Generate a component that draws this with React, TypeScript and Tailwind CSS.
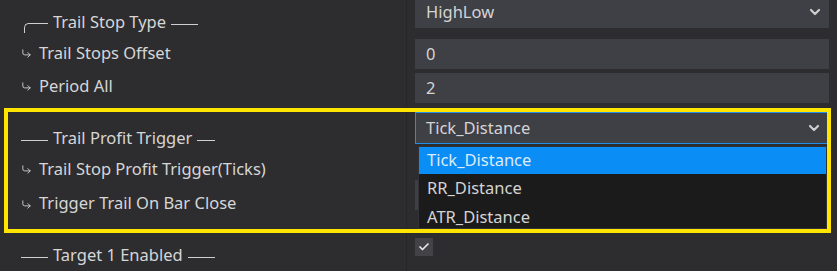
import { ChevronDown, Check, CornerDownRight } from 'lucide-react'

const font = { fontFamily: '"Noto Sans", "DejaVu Sans", sans-serif' }

function Label({ text, h, mt = 0 }: { text: React.ReactNode; h: number; mt?: number }) {
  return (
    <div className="flex items-center pl-[21px] text-[16.5px] text-[#d6d6d6] whitespace-nowrap" style={{ height: h, marginTop: mt }}>
      {text}
    </div>
  )
}

const Arrow = () => <CornerDownRight size={11} strokeWidth={2} className="mr-[7px] mt-[1px] text-[#d0d0d0]" />
const Line = ({ w }: { w: number }) => <span className="mt-[4px] inline-block h-px bg-[#cfcfcf]" style={{ width: w }} />

export default function App() {
  return (
    <div className="relative flex w-[837px] h-[271px] overflow-hidden bg-[#2d2d30]" style={font}>
      {/* labels */}
      <div className="w-[407px] shrink-0 border-r border-[#27272a] pt-[7px]">
        <Label
          h={30}
          text={
            <span className="flex items-center gap-[5px]">
              <span className="ml-[3px] mt-[12px] h-[10px] w-[24px] rounded-tl-[5px] border-l border-t border-[#cfcfcf]" />
              Trail Stop Type
              <Line w={27} />
            </span>
          }
        />
        <Label h={32} text={<><Arrow />Trail Stops Offset</>} />
        <Label h={34} text={<><Arrow />Period All</>} />
        <Label h={33} mt={19} text={<span className="flex items-center gap-[5px]"><Line w={27} />Trail Profit Trigger<Line w={18} /></span>} />
        <Label h={28} text={<><Arrow />Trail Stop Profit Trigger(Ticks)</>} />
        <Label h={41} text={<><Arrow />Trigger Trail On Bar Close</>} />
        <Label h={30} mt={16} text={<span className="flex items-center gap-[5px]"><Line w={27} />Target 1 Enabled<Line w={27} /></span>} />
      </div>

      {/* values */}
      <div className="flex-1 px-[8px] text-[16.5px] text-[#d4d4d4]">
        <div className="flex h-[28px] items-center justify-between bg-[#3f3f46] pb-[4px] pl-[11px] pr-[6px]">
          <span>HighLow</span>
          <ChevronDown size={16} strokeWidth={3.2} className="text-[#cfcfcf]" />
        </div>
        <div className="mt-[11px] flex h-[30px] items-center bg-[#3f3f46] pl-[11px]">0</div>
        <div className="mt-[4px] flex h-[30px] items-center bg-[#3f3f46] pl-[11px]">2</div>
        <div className="mt-[9px] flex h-[32px] items-center justify-between border border-[#1e8ee8] bg-[#3f3f46] pl-[10px] pr-[6px]">
          <span>Tick_Distance</span>
          <ChevronDown size={16} strokeWidth={3.2} className="text-[#cfcfcf]" />
        </div>
        <div className="mt-[36px] h-[30px] bg-[#3f3f46]" />
        <div className="mt-[28px] flex h-[18px] w-[18px] items-center justify-center bg-[#434347]">
          <Check size={12} strokeWidth={3.5} className="text-[#e6e6e6]" />
        </div>
      </div>

      {/* open dropdown list */}
      <div className="absolute left-[418px] top-[146px] w-[409px] h-[83px] bg-[#1b1b1c] border border-[#333337] text-[16.5px] text-[#d4d4d4]">
        <div className="flex h-[27px] items-center bg-[#0a8ef5] pl-[8px] text-[#dcebfa]">Tick_Distance</div>
        <div className="flex h-[29px] items-center pl-[8px]">RR_Distance</div>
        <div className="flex h-[29px] items-center pl-[8px]">ATR_Distance</div>
      </div>

      {/* highlight frame */}
      <div className="pointer-events-none absolute left-[4px] top-[108px] w-[827px] h-[125px] border-4 border-[#ffe500]" />
    </div>
  )
}
